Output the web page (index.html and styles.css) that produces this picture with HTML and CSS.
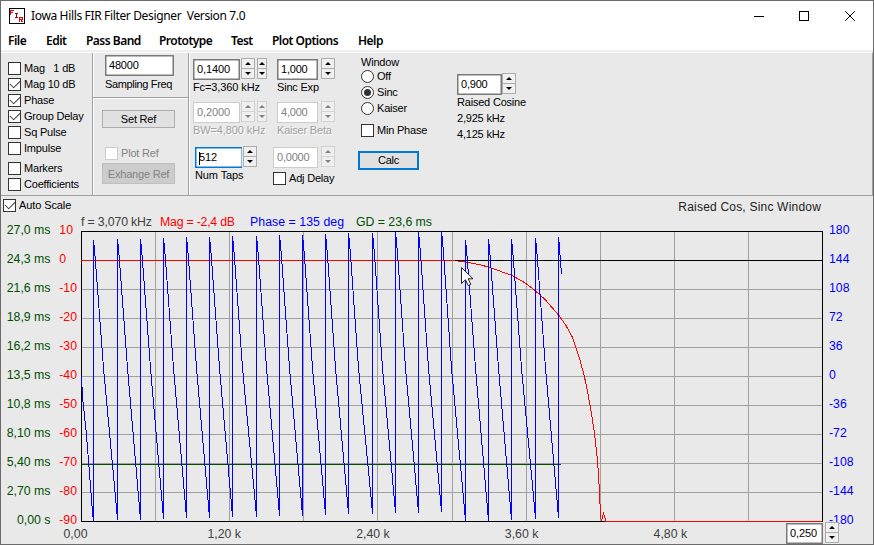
FILE: index.html
```html
<!DOCTYPE html>
<html lang="en">
<head>
    <meta charset="UTF-8">
    <meta name="viewport" content="width=device-width, initial-scale=1.0">
    <link rel="stylesheet" href="styles.css">
    <title>Iowa Hills FIR Filter Designer</title>
</head>
<body>
<div class="window">
    <header class="titlebar">
        <svg class="logo" width="16" height="16" viewBox="0 0 16 16" shape-rendering="crispEdges">
            <rect x="0.5" y="0.5" width="15" height="15" fill="#fff" stroke="#000"/>
            <path d="M1.5 7V2.5H5M1.5 4.5H4" fill="none" stroke="#e00000"/>
            <path d="M6 5.5H9M7.5 5V10M6 9.5H9" fill="none" stroke="#a00000"/>
            <path d="M10.5 14V9.5H13.5V11.5H10.5M12.5 11.5V13.5H14" fill="none" stroke="#e00000"/>
        </svg>
        <span class="title">Iowa Hills FIR Filter Designer&nbsp; Version 7.0</span>
        <svg class="controls" width="103" height="12" viewBox="0 0 103 12" fill="none" stroke="#000">
            <path d="M0 6.5H10" shape-rendering="crispEdges"/>
            <rect x="45.5" y="1.5" width="9" height="9" shape-rendering="crispEdges"/>
            <path d="M91.2 1.2L100.8 10.8M100.8 1.2L91.2 10.8"/>
        </svg>
    </header>
    <nav class="menu">
        <span class="m-file">File</span>
        <span class="m-edit">Edit</span>
        <span class="m-pass">Pass Band</span>
        <span class="m-proto">Prototype</span>
        <span class="m-test">Test</span>
        <span class="m-plot">Plot Options</span>
        <span>Help</span>
    </nav>

    <main class="panels">
        <section class="panel traces">
            <label class="check"><i class="box"></i>Mag&nbsp;&nbsp; 1 dB</label>
            <label class="check"><i class="box on"></i>Mag 10 dB</label>
            <label class="check"><i class="box on"></i>Phase</label>
            <label class="check"><i class="box on"></i>Group Delay</label>
            <label class="check"><i class="box"></i>Sq Pulse</label>
            <label class="check"><i class="box"></i>Impulse</label>
            <label class="check gap"><i class="box"></i>Markers</label>
            <label class="check"><i class="box"></i>Coefficients</label>
        </section>

        <section class="panel middle">
            <div class="sampling">
                <div class="field">48000</div>
                <div class="text">Sampling Freq</div>
            </div>
            <div class="reference">
                <div class="button">Set Ref</div>
                <label class="check off"><i class="box"></i>Plot Ref</label>
                <div class="button off">Exhange Ref</div>
            </div>
        </section>

        <section class="params">
            <div class="col col-a">
                <div class="entry"><div class="field">0,1400</div><i class="spin"></i><i class="spin thin"></i></div>
                <div class="text">Fc=3,360 kHz</div>
                <div class="entry off"><div class="field">0,2000</div><i class="spin"></i><i class="spin thin"></i></div>
                <div class="text off">BW=4,800 kHz</div>
                <div class="entry taps"><div class="field focus"><b class="caret"></b>512</div><i class="spin"></i></div>
                <div class="text taps-text">Num Taps</div>
            </div>
            <div class="col col-b">
                <div class="entry"><div class="field">1,000</div><i class="spin"></i></div>
                <div class="text">Sinc Exp</div>
                <div class="entry off"><div class="field">4,000</div><i class="spin"></i></div>
                <div class="text off">Kaiser Beta</div>
                <div class="entry delay off"><div class="field">0,0000</div><i class="spin"></i></div>
                <label class="check"><i class="box"></i>Adj Delay</label>
            </div>
            <div class="col col-c">
                <div class="text">Window</div>
                <label class="check"><i class="radio"></i>Off</label>
                <label class="check"><i class="radio on"></i>Sinc</label>
                <label class="check"><i class="radio"></i>Kaiser</label>
                <label class="check min"><i class="box"></i>Min Phase</label>
                <div class="button calc">Calc</div>
            </div>
            <div class="col col-d">
                <div class="entry"><div class="field">0,900</div><i class="spin"></i></div>
                <div class="text">Raised Cosine</div>
                <div class="text">2,925 kHz</div>
                <div class="text">4,125 kHz</div>
            </div>
        </section>
    </main>

    <section class="chart">
        <div class="chart-head">
            <label class="check"><i class="box on"></i>Auto Scale</label>
            <span class="filter-name">Raised Cos, Sinc Window</span>
        </div>
        <svg class="plot" id="plot" width="872" height="330" viewBox="1 214 872 330">
            <g id="grid" class="grid"></g>
            <path class="frame" d="M81.5 521.5V231.5H822.5V521.5Z"/>
            <path class="frame" d="M455 260.5H822"/>
            <path class="mag" d="M81 260.5H455L468 262.5L479 264.5L490 267.5L501 271.5L512 275.5L526 283.5L535 290.5L545 299.5L552 307.5L559 315.5L566 325.5L572 336.5L576.5 349L580 360L584.5 377L588 394L591 411L594.5 433L597.5 460L599.5 492L600.5 516L601.5 521L603.5 513.5L606 521.5H822"/>
            <path class="frame" d="M455 260.5H468"/>
            <path class="delay-line" d="M81 464.5H561"/>
            <path class="phase" id="phase"/>
            <g id="labels"></g>
            <g class="axis">
                <text x="81" y="226" fill="#404040" textLength="71">f = 3,070 kHz</text>
                <text x="160" y="226" fill="#f00" textLength="75">Mag = -2,4 dB</text>
                <text x="250" y="226" fill="#00f" textLength="94">Phase = 135 deg</text>
                <text x="356" y="226" fill="#005000" textLength="76">GD = 23,6 ms</text>
            </g>
            <path d="M461.5 267.5V283.5L465.5 279.8L468.2 285.6L470.8 284.4L468.2 278.8H473Z" fill="#fff" stroke="#222"/>
        </svg>
        <div class="entry span"><div class="field">0,250</div><i class="spin"></i></div>
    </section>
</div>

<script>
    const LEFT = 81, RIGHT = 822, TOP = 231, BOTTOM = 521;
    const delay = ["27,0 ms", "24,3 ms", "21,6 ms", "18,9 ms", "16,2 ms", "13,5 ms", "10,8 ms", "8,10 ms", "5,40 ms", "2,70 ms", "0,00 s"];
    const magEnd = [73, 66];
    const freq = ["0,00", "1,20 k", "2,40 k", "3,60 k", "4,80 k"];

    let grid = "";
    for (let i = 1; i < 10; i++) {
        const x = Math.round(LEFT + i * 74.1) + 0.5;
        const y = TOP + i * 29 + 0.5;
        grid += `<path d="M${x} ${TOP}V${BOTTOM}"/>`;
        if (i > 1) grid += `<path d="M${LEFT} ${y}H${RIGHT}"/>`;
    }
    document.getElementById("grid").innerHTML = grid;

    let labels = "";
    delay.forEach((text, i) => {
        const y = 234 + i * 29;
        labels += `<text class="axis end" x="50.5" y="${y}" fill="#005000">${text}</text>`;
        labels += `<text class="axis end" x="${magEnd[i] || 77}" y="${y}" fill="#f00">${10 - i * 10}</text>`;
        labels += `<text class="axis" x="829" y="${y}" fill="#00f">${180 - i * 36}</text>`;
    });
    freq.forEach((text, i) => {
        labels += `<text class="axis mid" x="${75.5 + i * 148.7}" y="538" fill="#404040">${text}</text>`;
    });
    document.getElementById("labels").innerHTML = labels;

    // x of each phase wrap, y where it starts and where it lands
    const wraps = [
        [93, 521, 240], [117, 520, 239], [140, 520, 239], [163, 519, 238], [186, 518, 237], [209, 518, 237],
        [232, 517, 236], [256, 517, 236], [279, 516, 235], [302, 516, 235], [325, 515, 234], [348, 514, 233],
        [372, 514, 233], [395, 513, 232], [418, 513, 232], [441, 512, 231], [465, 521, 240], [488, 521, 239],
        [511, 520, 239], [535, 519, 238], [558, 518, 237]
    ];
    let d = "M81.5 376L82.5 397L86.5 435L92.5 512";
    wraps.forEach(([x, low, high], i) => {
        d += `L${x + 0.5} ${low}V${high}L${x + 1.5} ${high + 10}`;
        if (i < wraps.length - 1) {
            const next = wraps[i + 1];
            d += `L${x + 2.5} ${high + 22}L${x + 10.5} 368L${next[0] - 0.5} ${next[1] - 12}`;
        }
    });
    d += "L560.5 262L561.5 274";
    document.getElementById("phase").setAttribute("d", d);
</script>
</body>
</html>
```
FILE: styles.css
```css
* {
  box-sizing: border-box;
}

body {
  margin: 0;
  font-family: "Liberation Sans", Arial, sans-serif;
  font-size: 11px;
  color: #000;
}

.window {
  width: 874px;
  height: 545px;
  border: 1px solid #6b6b6b;
  background: #e9e9e9;
  overflow: hidden;
}

.titlebar {
  display: flex;
  align-items: center;
  height: 29px;
  padding: 0 16px 0 8px;
  background: #fff;
}

.title {
  flex: 1;
  margin-left: 6px;
  font-family: "Noto Sans", "Open Sans", sans-serif;
  font-size: 12px;
  letter-spacing: -0.35px;
  white-space: nowrap;
}

/* menu */
.menu {
  display: flex;
  height: 22px;
  padding-left: 7px;
  background: #fff;
  border-bottom: 2px solid #f0f0f0;
  font-family: "Noto Sans", "Open Sans", sans-serif;
  font-size: 12px;
  font-weight: 600;
  line-height: 22px;
  letter-spacing: -0.52px;
  white-space: nowrap;
}

.m-file { width: 38px; }
.m-edit { width: 40px; }
.m-pass { width: 73px; }
.m-proto { width: 72px; }
.m-test { width: 41px; }
.m-plot { width: 86px; }

/* panels */
.panels {
  display: flex;
  height: 144px;
  border-top: 1px solid #fff;
  border-bottom: 1px solid #a0a0a0;
  border-right: 1px solid #a0a0a0;
  letter-spacing: -0.2px;
}

.panel {
  border-right: 1px solid #a0a0a0;
  box-shadow: 1px 0 #fff;
}

.traces {
  width: 92px;
  padding: 7px 0 0 7px;
}

.check {
  display: flex;
  align-items: center;
  height: 16px;
  white-space: nowrap;
}

.check.gap {
  margin-top: 4px;
}

.box,
.radio {
  flex: none;
  width: 13px;
  height: 13px;
  margin-right: 3px;
  border: 1px solid #333;
  background: #fff;
}

.box.on::after {
  content: "";
  display: block;
  width: 9px;
  height: 5px;
  margin: 1px 0 0 1px;
  border-left: 1.5px solid #333;
  border-bottom: 1.5px solid #333;
  transform: rotate(-45deg) scale(0.95);
}

.radio {
  border-radius: 50%;
}

.radio.on::after {
  content: "";
  display: block;
  width: 7px;
  height: 7px;
  margin: 2px;
  border-radius: 50%;
  background: #333;
}

.text {
  height: 16px;
  line-height: 14px;
  white-space: nowrap;
}

.text.off {
  color: #a0a0a0;
  text-shadow: 1px 1px #fff;
}

.field {
  height: 21px;
  padding-left: 3px;
  border: 1px solid #7a7a7a;
  box-shadow: inset 0 0 0 0.5px #7a7a7a;
  background: #fff;
  line-height: 18px;
  white-space: nowrap;
}

.middle {
  width: 96px;
}

.sampling {
  height: 45px;
  padding: 2px 12px 0 12px;
  border-bottom: 1px solid #a0a0a0;
  box-shadow: 0 1px #fff;
}

.sampling .field {
  width: 69px;
}

.sampling .text {
  line-height: 16px;
  letter-spacing: -0.35px;
}

.reference {
  padding: 12px 0 0 9px;
}

.button {
  width: 73px;
  height: 18px;
  border: 1px solid #adadad;
  background: #e1e1e1;
  line-height: 17px;
  text-align: center;
}

.button.off {
  height: 21px;
  margin-top: 2px;
  border-color: #bfbfbf;
  background: #ccc;
  color: #838383;
  line-height: 20px;
}

.check.off {
  margin: 17px 0 0 3px;
  color: #838383;
}

.check.off .box {
  border-color: #ccc;
}

/* value entries with up/down buttons */
.entry {
  display: flex;
  height: 22px;
}

.entry .field {
  width: 47px;
  margin-top: 1px;
}

.spin {
  width: 14px;
  height: 21px;
  margin-left: 1px;
  border: 1px solid #acacac;
  background:
    linear-gradient(#acacac, #acacac) 0 9px / 100% 1px no-repeat,
    #f0f0f0;
  position: relative;
}

.spin::before,
.spin::after {
  content: "";
  position: absolute;
  left: 50%;
  margin-left: -3px;
  border: 3px solid transparent;
}

.spin::before {
  top: 0;
  border-bottom-color: #000;
}

.spin::after {
  bottom: 0;
  border-top-color: #000;
}

.spin.thin {
  width: 10px;
  margin-left: 2px;
}

.entry.off .field {
  border-color: #ccc;
  box-shadow: none;
  color: #808080;
}

.entry.off .spin {
  border-color: #d2d2d2;
  background:
    linear-gradient(#d2d2d2, #d2d2d2) 0 9px / 100% 1px no-repeat,
    #efefef;
}

.entry.off .spin::before {
  border-bottom-color: #808080;
}

.entry.off .spin::after {
  border-top-color: #808080;
}

.params {
  display: flex;
  flex: 1;
  padding-left: 4px;
}

.col {
  padding-top: 5px;
}

.col-a {
  width: 84px;
  letter-spacing: -0.1px;
}

.col-a .text.off,
.col-b .text.off {
  margin-bottom: 7px;
}

.col-a .entry.off,
.col-b .entry.off {
  margin-top: 5px;
}

.col-a .taps {
  padding-left: 2px;
}

.field.focus {
  width: 47px;
  border-color: #0078d7;
  border-right: 0;
  box-shadow: inset 0 0 0 0.5px #0078d7;
}

.caret {
  display: inline-block;
  width: 1px;
  height: 13px;
  margin-right: -1px;
  background: #000;
  vertical-align: middle;
}

.taps-text {
  padding-left: 2px;
}

.col-b {
  width: 84px;
}

.col-b .entry .field {
  width: 41px;
}

.col-b .spin {
  margin-left: 3px;
}

.col-b .entry.delay {
  margin: 0 0 0 -4px;
}

.col-b .delay .field {
  width: 45px;
}

.col-b .check {
  margin: 2px 0 0 -4px;
}

.col-c {
  width: 96px;
  padding-top: 2px;
}

.col-c .text {
  height: 13px;
}

.col-c .min {
  margin-top: 6px;
}

.calc {
  width: 61px;
  height: 19px;
  margin: 13px 0 0 -3px;
  border: 2px solid #0078d7;
  line-height: 15px;
}

.col-d {
  padding-top: 20px;
}

.col-d .entry .field {
  width: 45px;
}

.col-d .entry .spin {
  margin-left: 0;
}

/* chart */
.chart {
  position: relative;
  height: 348px;
  letter-spacing: -0.1px;
}

.chart-head {
  display: flex;
  justify-content: space-between;
  height: 18px;
  padding: 1px 52px 0 2px;
}

.filter-name {
  font-size: 12px;
  line-height: 20px;
  color: #222;
  letter-spacing: 0.2px;
}

.plot {
  display: block;
}

.grid path {
  stroke: #a0a0a0;
  shape-rendering: crispEdges;
}

.frame,
.mag,
.phase,
.delay-line {
  fill: none;
  stroke: #000;
  shape-rendering: crispEdges;
}

.mag {
  stroke: #f00;
}

.phase {
  stroke: #00f;
}

.delay-line {
  stroke: #005000;
}

.axis {
  font-size: 12.3px;
  letter-spacing: 0;
}

.end {
  text-anchor: end;
}

.mid {
  text-anchor: middle;
}

.span {
  position: absolute;
  left: 785px;
  top: 326px;
}

.span .field {
  width: 37px;
}

.span .spin {
  margin-left: 2px;
}
```
